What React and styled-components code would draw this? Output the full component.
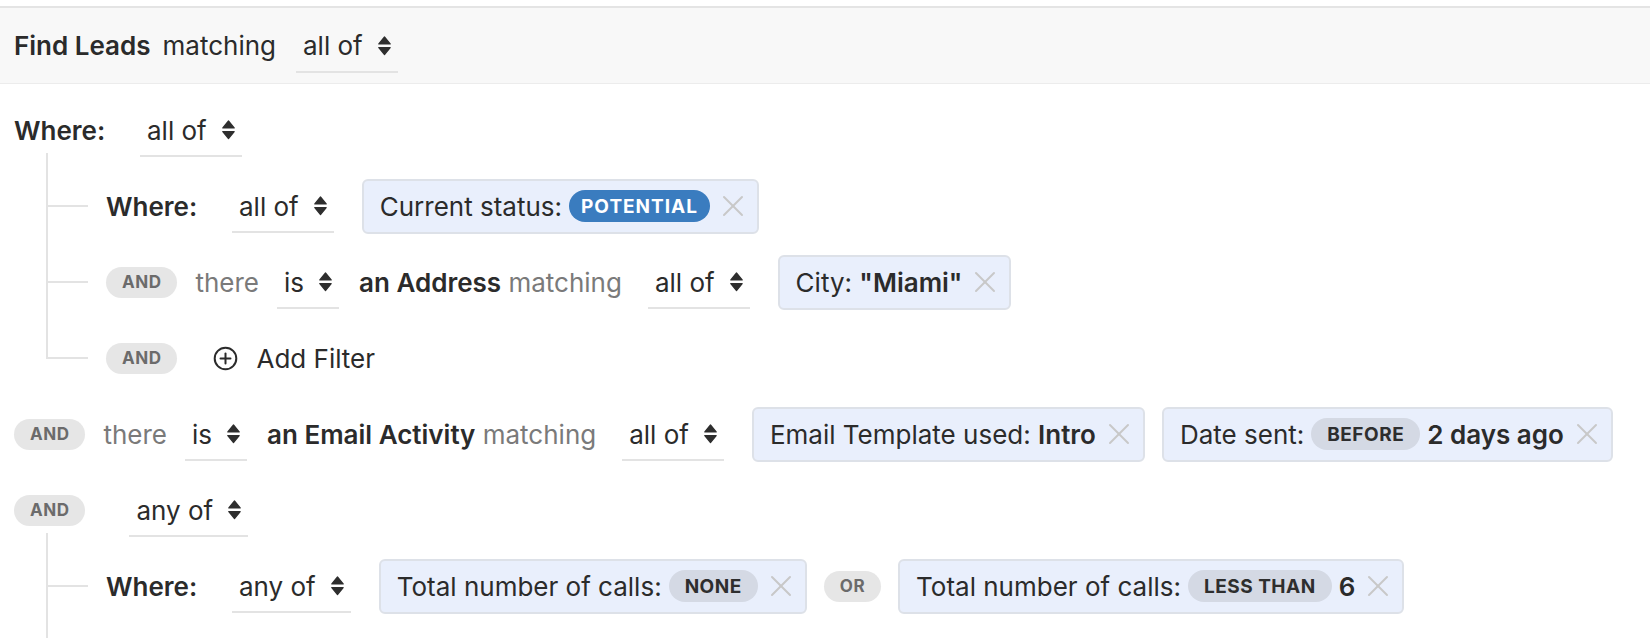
import React from 'react';
import styled, { createGlobalStyle } from 'styled-components';

const GlobalStyle = createGlobalStyle`
  html, body { margin: 0; padding: 0; background: #ffffff; }
  body {
    font-family: Inter, "Noto Sans", sans-serif;
    color: #2b2b2b;
    -webkit-font-smoothing: antialiased;
  }
`;

const Page = styled.div`
  padding-top: 6px;
  font-size: 26px;
  overflow: hidden;
  height: 632px;
`;

const Header = styled.header`
  display: flex;
  align-items: center;
  gap: 12px;
  height: 75px;
  padding-left: 14px;
  background: #f8f8f8;
  border-top: 2px solid #e4e4e4;
  border-bottom: 1px solid #ececec;
`;

const Body = styled.div`
  padding: 8px 0 0 14px;
`;

const Row = styled.div`
  display: flex;
  align-items: center;
  gap: 18px;
  height: 76px;
  white-space: nowrap;
`;

const Tree = styled.div`
  position: relative;
  margin-left: 32px;
  padding-left: 60px;

  &::before {
    content: '';
    position: absolute;
    left: 0;
    top: -15px;
    width: 2px;
    height: 15px;
    background: #e3e3e3;
  }

  /* a group whose filters run on below the visible list keeps its rail open */
  &::after {
    content: '';
    display: ${(p) => (p.$continues ? 'block' : 'none')};
    position: absolute;
    left: 0;
    top: 100%;
    width: 2px;
    height: 80px;
    background: #e3e3e3;
  }
`;

const Branch = styled(Row)`
  position: relative;

  &::before {
    content: '';
    position: absolute;
    left: -60px;
    top: 0;
    bottom: 0;
    width: 2px;
    background: #e3e3e3;
  }

  &::after {
    content: '';
    position: absolute;
    left: -60px;
    top: calc(50% - 1px);
    width: 42px;
    height: 2px;
    background: #e3e3e3;
  }

  &:last-child::before {
    bottom: ${(p) => (p.$open ? '0' : 'calc(50% - 1px)')};
  }
`;

const Title = styled.span`
  font-weight: 600;
`;

const WhereLabel = styled.span`
  display: inline-block;
  width: 108px;
  font-weight: 600;
`;

const Muted = styled.span`
  color: #7a7a7a;
`;

const Phrase = styled.span`
  margin-right: 8px;
  color: #7a7a7a;

  b {
    font-weight: 600;
    color: #2b2b2b;
  }
`;

const SelectBox = styled.div`
  display: inline-flex;
  align-items: center;
  gap: 15px;
  box-sizing: border-box;
  height: 54px;
  padding: 2px 7px 0 7px;
  margin-left: ${(p) => p.$indent || 0}px;
  margin-right: 2px;
  border-bottom: 2px solid #e3e3e3;
  color: #2b2b2b;
`;

const SortIcon = styled.svg`
  flex: none;
  width: 13px;
  height: 20px;
  fill: #2e2e2e;
  stroke: #2e2e2e;
`;

const Badge = styled.span`
  display: inline-flex;
  align-items: center;
  justify-content: center;
  box-sizing: border-box;
  height: 31px;
  padding: 0 16px;
  border-radius: 16px;
  background: #e6e6e6;
  color: #6b6b6b;
  font-size: 17px;
  font-weight: 700;
  letter-spacing: 0.5px;
`;

const ChipList = styled.div`
  display: flex;
  align-items: center;
  gap: 17px;
  margin-left: 8px;
`;

const Chip = styled.div`
  display: inline-flex;
  align-items: center;
  gap: 7px;
  box-sizing: border-box;
  height: 55px;
  padding: 0 13px 0 16px;
  background: #e9effc;
  border: 2px solid #dde1e8;
  border-radius: 6px;

  b {
    font-weight: 600;
  }
`;

const Pill = styled.span`
  display: inline-flex;
  align-items: center;
  height: 32px;
  padding: ${(p) => (p.$tone === 'blue' ? '0 12px' : '0 16px')};
  border-radius: 16px;
  font-size: 19px;
  font-weight: 700;
  letter-spacing: ${(p) => (p.$tone === 'blue' ? '1px' : '0.5px')};
  text-transform: uppercase;
  background: ${(p) => (p.$tone === 'blue' ? '#3a7cbf' : '#d4d9e4')};
  color: ${(p) => (p.$tone === 'blue' ? '#ffffff' : '#2e2e2e')};
`;

const Remove = styled.button`
  display: inline-flex;
  align-items: center;
  justify-content: center;
  margin-left: 5px;
  padding: 0;
  border: 0;
  background: none;
  cursor: pointer;
`;

const AddFilter = styled.button`
  display: inline-flex;
  align-items: center;
  gap: 18px;
  margin-left: 18px;
  padding: 0;
  border: 0;
  background: none;
  font: inherit;
  color: #2b2b2b;
  cursor: pointer;
`;

const Select = ({ value, indent }) => (
  <SelectBox $indent={indent}>
    <span>{value}</span>
    <SortIcon viewBox="0 0 13 20" strokeWidth="1.2" strokeLinejoin="round">
      <path d="M6.5 1 L12.2 8 L0.8 8 Z" />
      <path d="M0.8 11.5 L12.2 11.5 L6.5 18.5 Z" />
    </SortIcon>
  </SelectBox>
);

const CloseIcon = () => (
  <svg width="22" height="22" viewBox="0 0 22 22" stroke="#c8c8c8" strokeWidth="2" strokeLinecap="round">
    <line x1="2" y1="2" x2="20" y2="20" />
    <line x1="20" y1="2" x2="2" y2="20" />
  </svg>
);

const PlusCircle = () => (
  <svg width="25" height="25" viewBox="0 0 25 25" fill="none" stroke="#2b2b2b" strokeWidth="2" strokeLinecap="round">
    <circle cx="12.5" cy="12.5" r="10.8" />
    <line x1="12.5" y1="7.5" x2="12.5" y2="17.5" />
    <line x1="7.5" y1="12.5" x2="17.5" y2="12.5" />
  </svg>
);

const FilterChip = ({ children }) => (
  <Chip>
    {children}
    <Remove aria-label="Remove filter">
      <CloseIcon />
    </Remove>
  </Chip>
);

export default function App() {
  return (
    <>
      <GlobalStyle />
      <Page>
        <Header>
          <Title>Find Leads</Title>
          <span>matching</span>
          <Select value="all of" indent={8} />
        </Header>

        <Body>
          <Row>
            <WhereLabel>Where:</WhereLabel>
            <Select value="all of" />
          </Row>
          <Tree>
            <Branch>
              <WhereLabel>Where:</WhereLabel>
              <Select value="all of" />
              <ChipList>
                <FilterChip>
                  <span>Current status:</span>
                  <Pill $tone="blue">Potential</Pill>
                </FilterChip>
              </ChipList>
            </Branch>
            <Branch>
              <Badge>AND</Badge>
              <Muted>there</Muted>
              <Select value="is" />
              <Phrase>
                <b>an Address</b> matching
              </Phrase>
              <Select value="all of" />
              <ChipList>
                <FilterChip>
                  <span>
                    City: <b>"Miami"</b>
                  </span>
                </FilterChip>
              </ChipList>
            </Branch>
            <Branch>
              <Badge>AND</Badge>
              <AddFilter>
                <PlusCircle />
                <span>Add Filter</span>
              </AddFilter>
            </Branch>
          </Tree>

          <Row>
            <Badge>AND</Badge>
            <Muted>there</Muted>
            <Select value="is" />
            <Phrase>
              <b>an Email Activity</b> matching
            </Phrase>
            <Select value="all of" />
            <ChipList>
              <FilterChip>
                <span>
                  Email Template used: <b>Intro</b>
                </span>
              </FilterChip>
              <FilterChip>
                <span>Date sent:</span>
                <Pill>Before</Pill>
                <b>2 days ago</b>
              </FilterChip>
            </ChipList>
          </Row>

          <Row>
            <Badge>AND</Badge>
            <Select value="any of" indent={26} />
          </Row>
          <Tree $continues>
            <Branch $open>
              <WhereLabel>Where:</WhereLabel>
              <Select value="any of" />
              <ChipList>
                <FilterChip>
                  <span>Total number of calls:</span>
                  <Pill>None</Pill>
                </FilterChip>
                <Badge>OR</Badge>
                <FilterChip>
                  <span>Total number of calls:</span>
                  <Pill>Less than</Pill>
                  <b>6</b>
                </FilterChip>
              </ChipList>
            </Branch>
          </Tree>
        </Body>
      </Page>
    </>
  );
}
